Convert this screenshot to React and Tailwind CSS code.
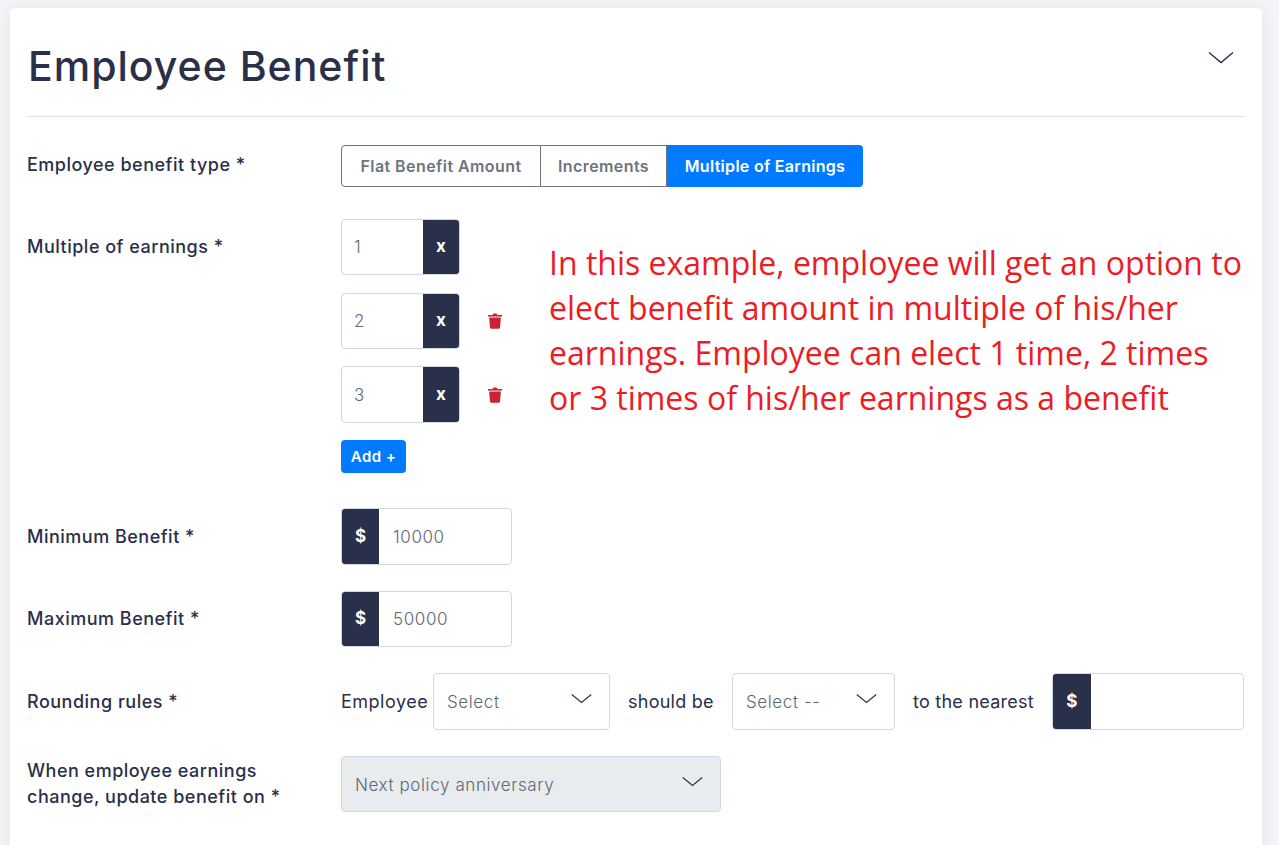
import React from "react";

const Chevron = ({ className }) => (
  <svg viewBox="0 0 26 13" fill="none" stroke="#2a2f4a" strokeWidth="1.4" className={className}>
    <path d="M1 1.5 L13 11.5 L25 1.5" />
  </svg>
);

const TrashIcon = () => (
  <svg viewBox="0 0 14 16" className="w-[14px] h-[16px]" fill="#c82333">
    <path d="M0 2h14v1.6H0z" />
    <path d="M4.6 2 5.4.4h3.2L9.4 2z" />
    <path d="M1.1 4.4h11.8l-.9 10.2a1.3 1.3 0 0 1-1.3 1.2H3.3A1.3 1.3 0 0 1 2 14.6z" />
  </svg>
);

const Label = ({ children, className = "" }) => (
  <div className={`w-[314px] shrink-0 text-[18px] font-medium text-[#2a2f4a] tracking-[0.5px] ${className}`}>
    {children}
  </div>
);

const Addon = ({ children, className = "" }) => (
  <div className={`flex items-center justify-center bg-[#2a2f4a] text-white font-bold text-[17px] ${className}`}>
    {children}
  </div>
);

const MultipleRow = ({ value, canDelete, className = "" }) => (
  <div className={`flex items-center ${className}`}>
    <div className="flex w-[119px] h-full border border-[#ced9e2] rounded overflow-hidden bg-white">
      <div className="flex-1 pl-[12px] pt-[2px] flex items-center text-[17px] text-[#5f6770] font-light tracking-[0.6px]">{value}</div>
      <Addon className="w-[36px]">x</Addon>
    </div>
    {canDelete && (
      <div className="ml-[28px] flex items-center">
        <TrashIcon />
      </div>
    )}
  </div>
);

const MoneyInput = ({ value, className = "", addonClass = "w-[37px]" }) => (
  <div className={`flex border border-[#ced9e2] rounded overflow-hidden bg-white ${className}`}>
    <Addon className={addonClass}>$</Addon>
    <div className="flex-1 pl-[14px] pt-[2px] flex items-center text-[17px] text-[#5f6770] font-light tracking-[0.6px]">{value}</div>
  </div>
);

const SelectBox = ({ text, className = "" }) => (
  <div className={`flex items-center justify-between border border-[#ced9e2] rounded pl-[13px] pr-[17px] ${className}`}>
    <span className="text-[17px] text-[#5f6770] font-light tracking-[0.6px] mt-[3px]">{text}</span>
    <Chevron className="w-[21px] h-[11px] mb-[6px]" />
  </div>
);

export default function App() {
  return (
    <div className="h-[845px] overflow-hidden bg-[#f4f5f8] pt-[8px] pl-[10px] pr-[17px] font-['Inter',sans-serif]">
      <div className="bg-white rounded-t-[6px] h-[900px] pl-[17px] pr-[18px] shadow-[0_0_16px_rgba(42,47,74,0.08)]">
        <div className="flex items-center justify-between h-[109px] border-b border-[#dee2e6] pr-[10px]">
          <h1 className="text-[41px] font-medium text-[#2a2f4a] tracking-[1px] pl-[1px] pt-[10px]">Employee Benefit</h1>
          <Chevron className="w-[26px] h-[13px] mb-[9px]" />
        </div>

        <div className="flex items-start mt-[28px]">
          <Label className="mt-[6px]">Employee benefit type *</Label>
          <div className="flex h-[42px] text-[16px] font-semibold tracking-[0.42px]">
            <div className="flex items-center justify-center w-[200px] border border-[#6c757d] rounded-l text-[#6c757d]">Flat Benefit Amount</div>
            <div className="flex items-center justify-center w-[126px] border border-l-0 border-[#6c757d] text-[#6c757d]">Increments</div>
            <div className="flex items-center justify-center w-[196px] bg-[#007bff] text-white rounded-r tracking-[0.3px]">Multiple of Earnings</div>
          </div>
        </div>

        <div className="flex items-start mt-[32px]">
          <Label className="mt-[14px]">Multiple of earnings *</Label>
          <div className="w-[208px] shrink-0 flex flex-col">
            <MultipleRow value="1" className="h-[56px]" />
            <MultipleRow value="2" canDelete className="h-[56px] mt-[18px]" />
            <MultipleRow value="3" canDelete className="h-[57px] mt-[17px]" />
            <button className="mt-[17px] w-[65px] h-[33px] rounded bg-[#007bff] text-white text-[15px] font-semibold tracking-[0.4px] pt-[1px]">Add +</button>
          </div>
          <p className="mt-[21px] w-[700px] font-['Open_Sans',sans-serif] text-[#ed1c24] text-[32px] leading-[45px]">
            In this example, employee will get an option to elect benefit amount in multiple of his/her earnings. Employee can elect 1 time, 2 times or 3 times of his/her earnings as a benefit
          </p>
        </div>

        <div className="flex items-start mt-[35px]">
          <Label className="mt-[15px]">Minimum Benefit *</Label>
          <MoneyInput value="10000" className="w-[171px] h-[57px]" />
        </div>

        <div className="flex items-start mt-[26px]">
          <Label className="mt-[14px]">Maximum Benefit *</Label>
          <MoneyInput value="50000" className="w-[171px] h-[56px]" />
        </div>

        <div className="flex items-start mt-[26px]">
          <Label className="mt-[15px]">Rounding rules *</Label>
          <div className="flex items-center text-[18px] text-[#2a2f4a] tracking-[0.25px]">
            <span className="w-[92px] pb-[1px] tracking-[0.5px]">Employee</span>
            <SelectBox text="Select" className="w-[177px] h-[57px]" />
            <span className="w-[122px] pl-[18px]">should be</span>
            <SelectBox text="Select --" className="w-[163px] h-[57px]" />
            <span className="w-[157px] pl-[18px]">to the nearest</span>
            <MoneyInput value="" addonClass="w-[38px]" className="w-[192px] h-[57px]" />
          </div>
        </div>

        <div className="flex items-start mt-[26px]">
          <Label className="leading-[26px] mt-[2px]">
            When employee earnings<br />change, update benefit on *
          </Label>
          <SelectBox text="Next policy anniversary" className="w-[380px] h-[56px] bg-[#e9ecef]" />
        </div>
      </div>
    </div>
  );
}
